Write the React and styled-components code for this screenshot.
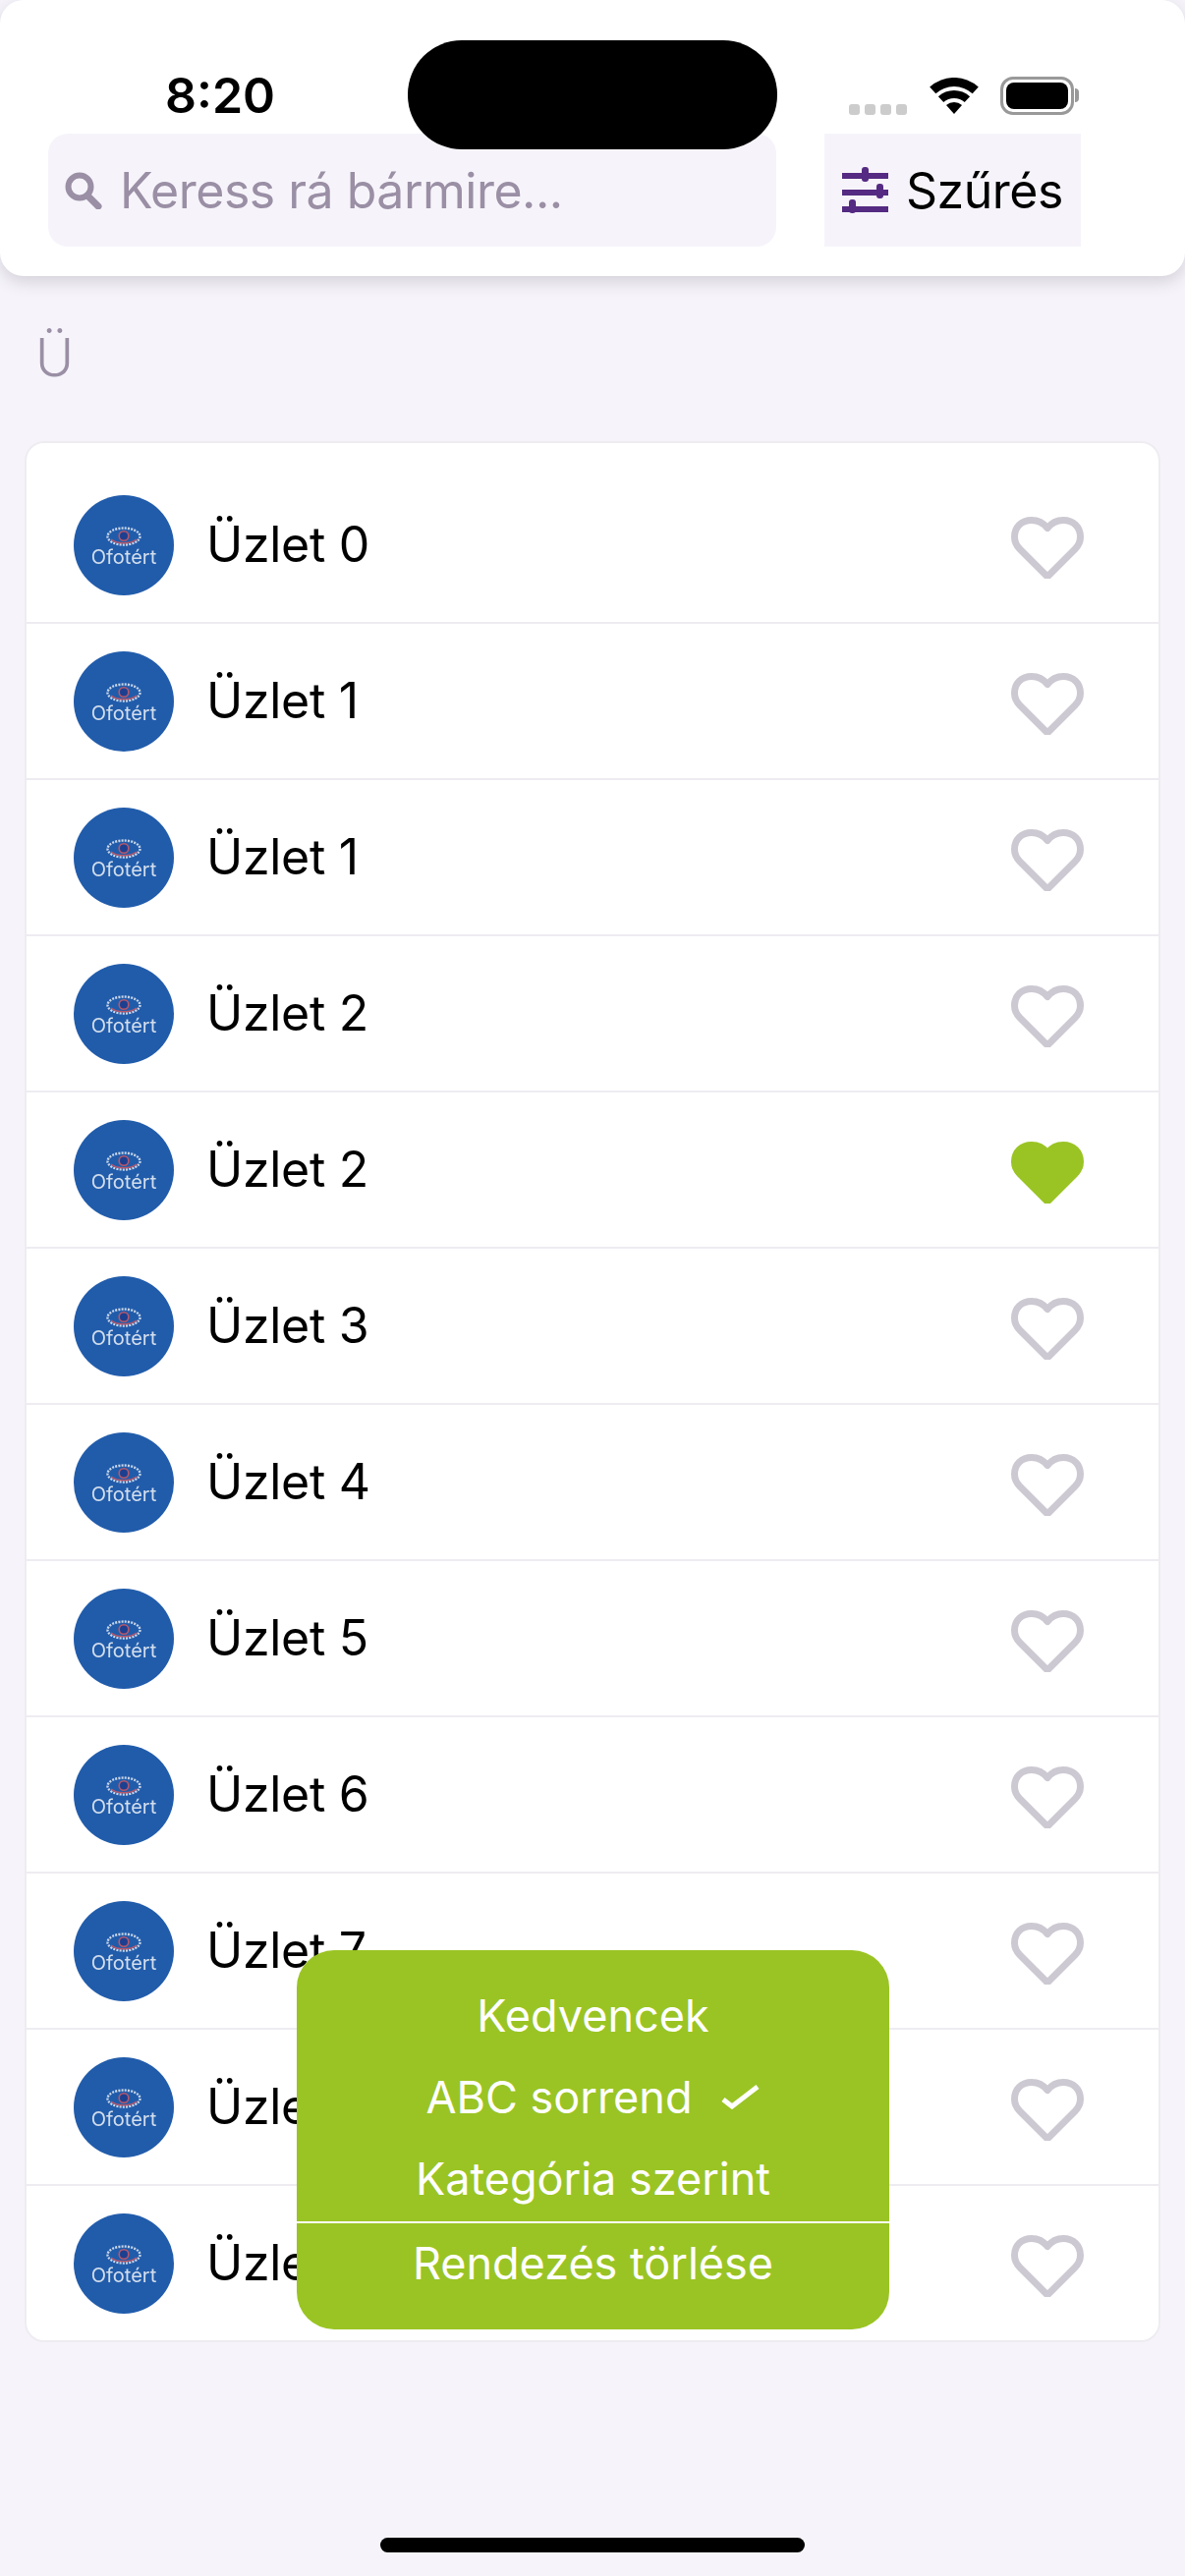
import React from "react";
import styled, { createGlobalStyle } from "styled-components";

const stores = ["0", "1", "1", "2", "2", "3", "4", "5", "6", "7", "8", "9"];
const sortOptions = [
  { label: "Kedvencek" },
  { label: "ABC sorrend", active: true },
  { label: "Kategória szerint" },
];

const heartPath =
  "M37 11.5C33 6.5 27 3.5 21 3.5C10.5 3.5 3.5 10.5 3.5 20.5C3.5 26 5.5 29.5 9 33L37 61L65 33C68.5 29.5 70.5 26 70.5 20.5C70.5 10.5 63.5 3.5 53 3.5C47 3.5 41 6.5 37 11.5Z";

function Heart({ filled }) {
  return (
    <HeartIcon viewBox="0 0 74 63">
      <path
        d={heartPath}
        fill={filled ? "#9ac423" : "none"}
        stroke={filled ? "#9ac423" : "#cdc9d2"}
        strokeWidth="7"
        strokeLinejoin="round"
      />
    </HeartIcon>
  );
}

function Logo() {
  return (
    <Avatar>
      <LogoMark width="36" height="20" viewBox="0 0 36 20">
        <ellipse cx="18" cy="10" rx="16.5" ry="8.5" fill="none" stroke="#c9d6e8" strokeWidth="2.4" strokeDasharray="2 1.2" />
        <path d="M5 13C11 18 25 18 31 13" fill="none" stroke="#b8586a" strokeWidth="1.6" />
        <circle cx="18" cy="9.5" r="4.8" fill="#1d3f8f" stroke="#b8586a" strokeWidth="1.6" />
      </LogoMark>
      <LogoText>Ofotért</LogoText>
    </Avatar>
  );
}

export default function App() {
  return (
    <Page>
      <GlobalStyle />
      <Header>
        <StatusBar>
          <Time>8:20</Time>
          <StatusIcons>
            <Signal>
              <i />
              <i />
              <i />
              <i />
            </Signal>
            <svg width="50" height="37" viewBox="0 0 50 37" fill="#000">
              <path d="M0.2 9.5A37 37 0 0 1 49.8 9.5L43.7 16.2A28 28 0 0 0 6.3 16.2Z" />
              <path d="M8.9 19.2A24 24 0 0 1 41.1 19.2L35.7 25.1A16 16 0 0 0 14.3 25.1Z" />
              <path d="M17 28.1A12 12 0 0 1 33 28.1L25 37Z" />
            </svg>
            <Battery>
              <BatteryFill />
            </Battery>
          </StatusIcons>
        </StatusBar>
        <Island />
        <SearchRow>
          <SearchBox>
            <svg width="38" height="38" viewBox="0 0 38 38">
              <circle cx="15" cy="15" r="11.5" fill="none" stroke="#9a8fa5" strokeWidth="6" />
              <path d="M23 24L34 35" stroke="#9a8fa5" strokeWidth="7" strokeLinecap="round" />
            </svg>
            <Placeholder>Keress rá bármire...</Placeholder>
          </SearchBox>
          <FilterButton>
            <svg width="47" height="47" viewBox="0 0 47 47" fill="#542a82">
              <rect x="0" y="6" width="47" height="6" />
              <rect x="20" y="0" width="7" height="15" rx="3" />
              <rect x="0" y="23" width="47" height="6" />
              <rect x="35" y="17" width="7" height="15" rx="3" />
              <rect x="0" y="40" width="47" height="6" />
              <rect x="7" y="33" width="7" height="14" rx="3" />
            </svg>
            <FilterLabel>Szűrés</FilterLabel>
          </FilterButton>
        </SearchRow>
      </Header>
      <SectionLetter>Ü</SectionLetter>
      <Card>
        {stores.map((n, i) => (
          <Row key={i}>
            <Logo />
            <StoreName>Üzlet {n}</StoreName>
            <Heart filled={i === 4} />
          </Row>
        ))}
      </Card>
      <SortMenu>
        {sortOptions.map((o) => (
          <SortItem key={o.label}>
            {o.label}
            {o.active && (
              <svg width="39" height="25" viewBox="0 0 39 25">
                <path d="M2 15L11 22L37 2" fill="none" stroke="#fff" strokeWidth="5" />
              </svg>
            )}
          </SortItem>
        ))}
        <SortClear>Rendezés törlése</SortClear>
      </SortMenu>
      <HomeBar />
    </Page>
  );
}

const GlobalStyle = createGlobalStyle`
  html, body {
    margin: 0;
    background: #f6f4fa;
  }
  * {
    box-sizing: border-box;
  }
`;

const Page = styled.div`
  position: relative;
  width: 1206px;
  height: 2622px;
  overflow: hidden;
  background: #f6f4fa;
  font-family: Inter, "Liberation Sans", sans-serif;
`;

const Header = styled.header`
  position: relative;
  height: 281px;
  background: #fff;
  border-radius: 24px;
  box-shadow: 0 6px 16px rgba(60, 50, 80, 0.18);
`;

const StatusBar = styled.div`
  display: flex;
  justify-content: space-between;
  align-items: center;
  height: 136px;
  padding: 78px 113px 19px 168px;
`;

const Time = styled.span`
  font-size: 50px;
  font-weight: 600;
  line-height: 39px;
  color: #000;
`;

const StatusIcons = styled.div`
  display: flex;
  align-items: center;
`;

const Signal = styled.div`
  display: flex;
  gap: 5px;
  margin: 27px 23px 0 0;

  i {
    width: 11px;
    height: 11px;
    border-radius: 3px;
    background: #ccc;
  }
`;

const Battery = styled.div`
  position: relative;
  width: 75px;
  height: 39px;
  margin-left: 22px;
  padding: 3px;
  border: 3px solid #999;
  border-radius: 13px;

  &::after {
    content: "";
    position: absolute;
    right: -8px;
    top: 9px;
    width: 4px;
    height: 14px;
    border-radius: 0 4px 4px 0;
    background: #999;
  }
`;

const BatteryFill = styled.div`
  width: 100%;
  height: 100%;
  border-radius: 8px;
  background: #000;
`;

const Island = styled.div`
  position: absolute;
  left: 415px;
  top: 41px;
  width: 376px;
  height: 111px;
  border-radius: 55px;
  background: #000;
`;

const SearchRow = styled.div`
  display: flex;
  gap: 49px;
  padding: 0 106px 0 49px;
`;

const SearchBox = styled.div`
  display: flex;
  align-items: center;
  gap: 18px;
  width: 741px;
  height: 115px;
  padding: 0 0 0 17px;
  border-radius: 20px;
  background: #f6f4fa;
`;

const Placeholder = styled.span`
  font-size: 50px;
  letter-spacing: -0.5px;
  color: #9a8fa5;
`;

const FilterButton = styled.div`
  display: flex;
  align-items: center;
  gap: 18px;
  width: 261px;
  height: 115px;
  padding-left: 18px;
  background: #f6f4fa;
`;

const FilterLabel = styled.span`
  font-size: 50px;
  letter-spacing: -0.5px;
  color: #000;
`;

const SectionLetter = styled.div`
  height: 168px;
  padding: 47px 0 0 36px;
  font-size: 53px;
  font-weight: 300;
  line-height: 72px;
  color: #9a8fa5;
`;

const Card = styled.div`
  width: 1156px;
  margin-left: 25px;
  padding-top: 25px;
  border: 2px solid #eeecf1;
  border-radius: 20px;
  background: #fff;
  overflow: hidden;
`;

const Row = styled.div`
  display: flex;
  align-items: center;
  height: 159px;
  padding: 0 76px 0 48px;
  border-bottom: 2px solid #eeecf1;

  &:last-child {
    border-bottom: 0;
    height: 157px;
  }
`;

const Avatar = styled.div`
  display: flex;
  flex-direction: column;
  align-items: center;
  justify-content: center;
  flex: none;
  width: 102px;
  height: 102px;
  padding-top: 6px;
  border-radius: 50%;
  background: #215cab;
`;

const LogoMark = styled.svg`
  filter: blur(0.5px);
`;

const LogoText = styled.span`
  font-size: 20px;
  line-height: 23px;
  color: #d3deec;
  filter: blur(0.4px);
`;

const StoreName = styled.span`
  flex: 1;
  margin-left: 33px;
  padding-bottom: 2px;
  font-size: 50px;
  letter-spacing: -0.3px;
  color: #000;
`;

const HeartIcon = styled.svg`
  flex: none;
  width: 74px;
  height: 63px;
  margin-top: 6px;
`;

const SortMenu = styled.div`
  position: absolute;
  left: 302px;
  top: 1985px;
  width: 603px;
  height: 386px;
  padding-top: 25px;
  border-radius: 38px;
  background: #9ac423;
`;

const SortItem = styled.div`
  display: flex;
  align-items: center;
  justify-content: center;
  gap: 30px;
  height: 83px;
  font-size: 45px;
  color: #fff;
`;

const SortClear = styled(SortItem)`
  height: 85px;
  margin-top: 2px;
  border-top: 2px solid #fff;
  padding-bottom: 3px;
`;

const HomeBar = styled.div`
  position: absolute;
  left: 387px;
  top: 2583px;
  width: 432px;
  height: 15px;
  border-radius: 8px;
  background: #000;
`;
